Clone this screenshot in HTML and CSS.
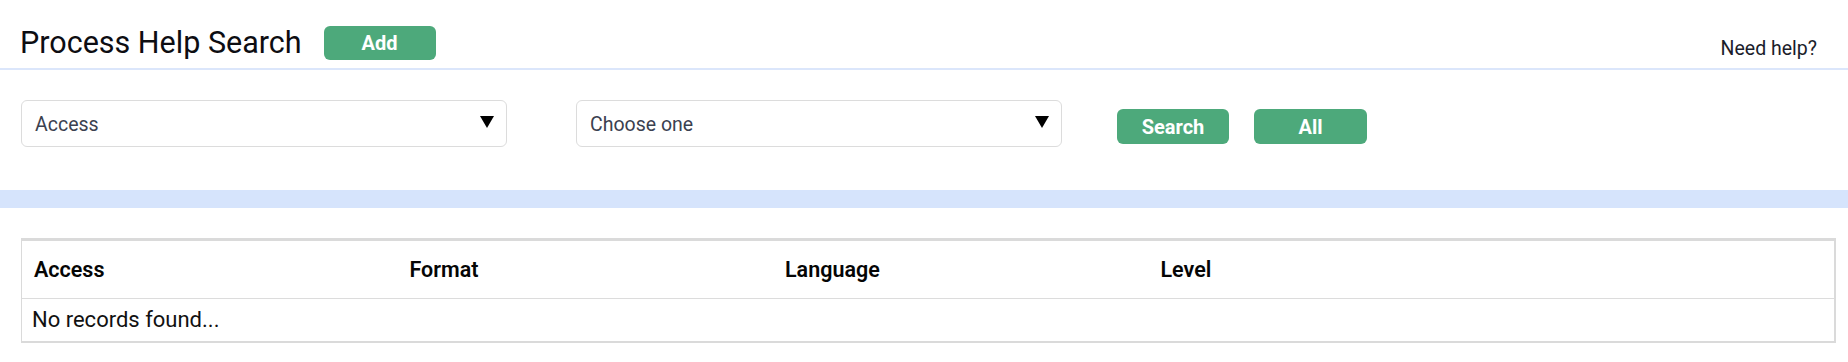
FILE: index.html
```html
<!DOCTYPE html>
<html lang="en">
<head>
<meta charset="utf-8">
<title>Process Help Search</title>
<link rel="stylesheet" href="styles.css">
</head>
<body>
<header class="topbar">
  <div class="title-group">
    <h1 class="page-title">Process Help Search</h1>
    <button class="btn btn-add" type="button">Add</button>
  </div>
  <a class="help-link" href="#">Need help?</a>
</header>

<section class="filters">
  <div class="select select-access">
    <span class="select-label">Access</span>
    <i class="caret"></i>
  </div>
  <div class="select select-choose">
    <span class="select-label">Choose one</span>
    <i class="caret"></i>
  </div>
  <button class="btn btn-search" type="button">Search</button>
  <button class="btn btn-all" type="button">All</button>
</section>

<div class="band"></div>

<section class="results">
  <div class="table-wrap">
    <table class="grid">
      <thead>
        <tr>
          <th class="col">Access</th>
          <th class="col">Format</th>
          <th class="col">Language</th>
          <th class="col">Level</th>
          <th class="col-rest"></th>
        </tr>
      </thead>
      <tbody>
        <tr>
          <td class="empty" colspan="5">No records found...</td>
        </tr>
      </tbody>
    </table>
  </div>
</section>
</body>
</html>
```

FILE: styles.css
```css
* { box-sizing: border-box; }

html, body {
  margin: 0;
  padding: 0;
  background: #ffffff;
}

body {
  font-family: Roboto, "Liberation Sans", sans-serif;
  color: #111;
}

.topbar {
  display: flex;
  justify-content: space-between;
  align-items: center;
  height: 70px;
  padding: 18px 31px 0 20px;
  border-bottom: 2px solid #dbe6fb;
}

.title-group {
  display: flex;
  align-items: center;
  gap: 22px;
}

.page-title {
  margin: 0;
  font-size: 30.5px;
  line-height: 36px;
  font-weight: 400;
  color: #0d0d12;
}

.help-link {
  margin-top: 11px;
  font-size: 19.5px;
  line-height: 24px;
  color: #1b1d2b;
  text-decoration: none;
}

.btn {
  border: 0;
  border-radius: 6px;
  background: #4da97b;
  color: #ffffff;
  font-family: Roboto, "Liberation Sans", sans-serif;
  font-weight: 700;
  font-size: 20px;
  padding: 0;
  cursor: pointer;
}

.btn-add {
  width: 112px;
  height: 34px;
}

.filters {
  display: flex;
  align-items: flex-start;
  padding: 30px 0 43px 21px;
}

.select {
  display: flex;
  align-items: center;
  justify-content: space-between;
  width: 486px;
  height: 47px;
  padding: 0 12px 0 13px;
  border: 1px solid #dcdcdc;
  border-radius: 6px;
  background: #fff;
}

.select-choose {
  margin-left: 69px;
}

.select-label {
  margin-top: 2px;
  font-size: 19.5px;
  color: #3b4150;
}

.caret {
  display: block;
  width: 0;
  height: 0;
  margin-top: -3px;
  border-left: 7px solid transparent;
  border-right: 7px solid transparent;
  border-top: 12px solid #000;
}

.btn-search {
  width: 112px;
  height: 35px;
  margin-top: 9px;
  margin-left: 55px;
}

.btn-all {
  width: 113px;
  height: 35px;
  margin-top: 9px;
  margin-left: 25px;
}

.band {
  height: 18px;
  background: #d6e4fc;
}

.results {
  padding: 30px 12px 0 21px;
}

.table-wrap {
  border-style: solid;
  border-color: #dadada;
  border-width: 3px 2px 2px 1px;
}

.grid {
  width: 100%;
  border-collapse: collapse;
  table-layout: fixed;
}

.grid th {
  height: 57px;
  padding: 0 12px;
  text-align: left;
  font-size: 21.5px;
  font-weight: 600;
  color: #050505;
  border-bottom: 1px solid #dcdcdc;
}

.grid .col {
  width: 375.5px;
}

.grid td.empty {
  height: 43px;
  padding: 0 10px;
  font-size: 22px;
  color: #111;
}
```
